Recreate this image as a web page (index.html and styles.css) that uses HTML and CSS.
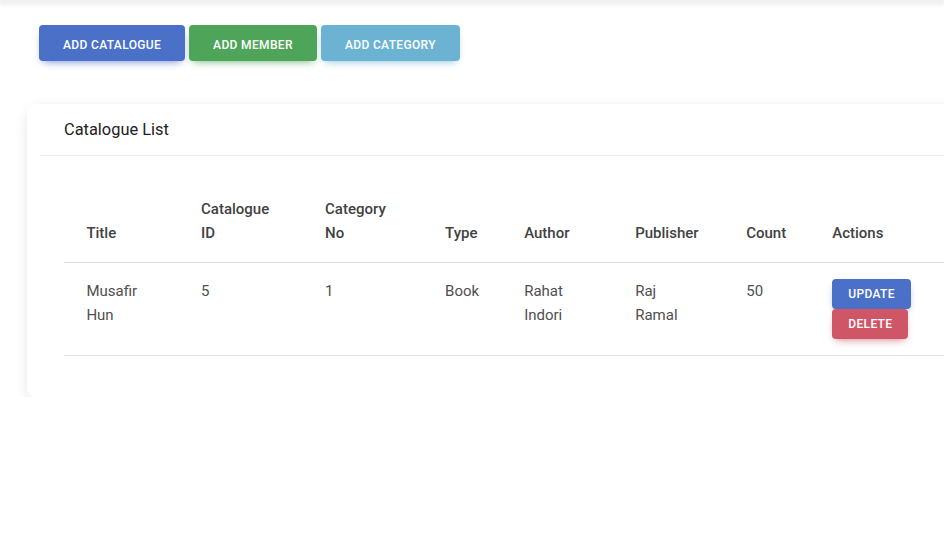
FILE: index.html
```html
<!DOCTYPE html>
<html>
<head>
<meta charset="utf-8">
<link rel="stylesheet" href="styles.css">
</head>
<body>
<div class="topbar"></div>
<main class="page">
  <div class="actions-bar">
    <button class="btn btn-primary">Add Catalogue</button>
    <button class="btn btn-success">Add Member</button>
    <button class="btn btn-info">Add Category</button>
  </div>
  <section class="card">
    <div class="card-header">Catalogue List</div>
    <div class="card-body">
      <table class="table">
        <colgroup>
          <col class="c-title"><col class="c-id"><col class="c-cat"><col class="c-type">
          <col class="c-author"><col class="c-pub"><col class="c-count"><col class="c-actions">
        </colgroup>
        <thead>
          <tr>
            <th>Title</th>
            <th>Catalogue<br>ID</th>
            <th>Category<br>No</th>
            <th>Type</th>
            <th>Author</th>
            <th>Publisher</th>
            <th>Count</th>
            <th>Actions</th>
          </tr>
        </thead>
        <tbody>
          <tr>
            <td>Musafir<br>Hun</td>
            <td>5</td>
            <td>1</td>
            <td>Book</td>
            <td>Rahat<br>Indori</td>
            <td>Raj<br>Ramal</td>
            <td>50</td>
            <td class="cell-actions">
              <button class="btn btn-sm btn-primary">Update</button>
              <button class="btn btn-sm btn-danger">Delete</button>
            </td>
          </tr>
        </tbody>
      </table>
    </div>
  </section>
</main>
</body>
</html>
```
FILE: styles.css
```css
html, body {
  margin: 0;
  padding: 0;
  overflow: hidden;
  background: #fff;
  font-family: Roboto, "Liberation Sans", sans-serif;
}

.topbar {
  height: 0;
  box-shadow: 0 1px 6px 2px rgba(0, 0, 0, 0.13);
}

.page {
  padding: 25px 0 0 27px;
  width: 1100px;
}

.actions-bar {
  display: flex;
  gap: 4px;
  margin-left: 12px;
}

.btn {
  border: 0;
  border-radius: 4px;
  color: #fff;
  font-family: Roboto, "Liberation Sans", sans-serif;
  font-weight: 500;
  font-size: 12px;
  line-height: 18px;
  letter-spacing: 0.35px;
  text-transform: uppercase;
  padding: 11px 24px 7px;
  cursor: pointer;
  display: block;
}

.btn-primary {
  background: #4b70c7;
  box-shadow: 0 4px 9px -4px rgba(75, 112, 199, 0.9);
}
.btn-success {
  background: #4ea55a;
  box-shadow: 0 4px 9px -4px rgba(78, 165, 90, 0.9);
}
.btn-info {
  background: #6cb3d3;
  box-shadow: 0 4px 9px -4px rgba(108, 179, 211, 0.9);
}
.btn-danger {
  background: #ce5667;
  box-shadow: 0 4px 9px -4px rgba(206, 86, 103, 0.9);
}

.btn-sm {
  padding: 6px 16px;
  line-height: 18px;
}

.card {
  margin-top: 43px;
  width: 1040px;
  background: #fff;
  border-radius: 8px;
  box-shadow: 0 2px 15px -3px rgba(0, 0, 0, 0.09), 0 10px 20px -2px rgba(0, 0, 0, 0.05);
  padding: 0 0 0 13px;
}

.card-header {
  padding: 14px 24px 13px;
  font-size: 16.4px;
  line-height: 24px;
  color: #212121;
  border-bottom: 1px solid #f0f0f0;
}

.card-body {
  padding: 25px 24px 25px;
}

.table {
  border-collapse: collapse;
  table-layout: fixed;
  width: 1000px;
  margin-bottom: 16px;
  font-size: 15px;
  line-height: 24px;
}

.c-title { width: 114.6px; }
.c-id { width: 124px; }
.c-cat { width: 120px; }
.c-type { width: 79px; }
.c-author { width: 111px; }
.c-pub { width: 111px; }
.c-count { width: 86px; }
.c-actions { width: 254px; }

.table th,
.table td {
  padding: 16px 22.4px;
  text-align: left;
  border-bottom: 1px solid #e0e0e0;
}

.table th {
  font-weight: 500;
  color: #424242;
  vertical-align: bottom;
  padding-bottom: 17px;
}

.table td {
  font-weight: 400;
  color: #4f4f4f;
  vertical-align: top;
}

.cell-actions {
  padding-left: 20px;
}
.cell-actions .btn {
  margin: 0;
}
```
